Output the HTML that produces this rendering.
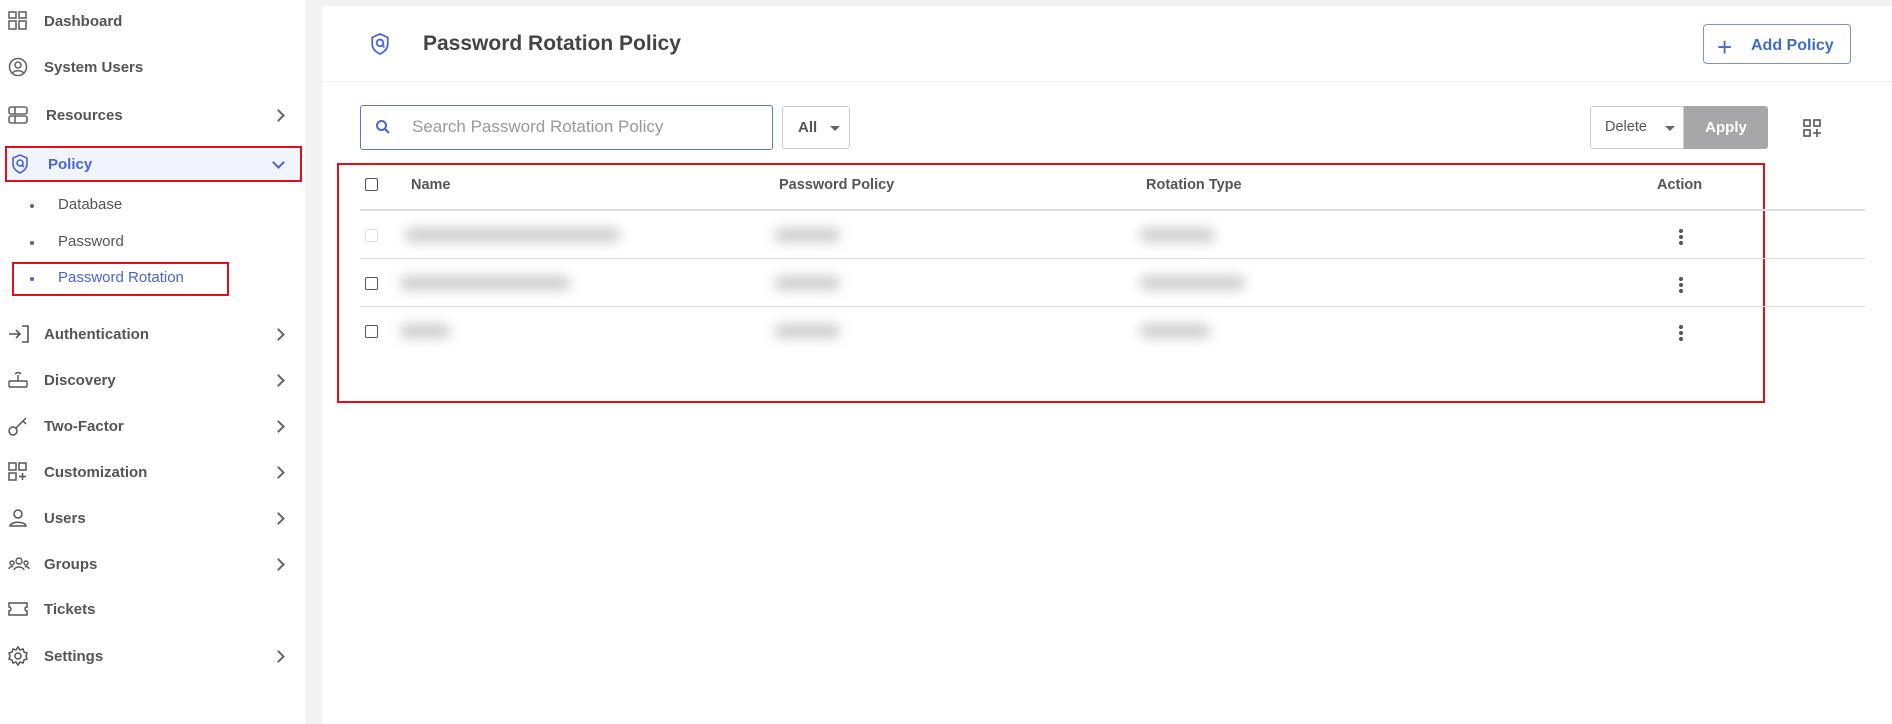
<!DOCTYPE html>
<html><head><meta charset="utf-8"><style>
*{box-sizing:border-box;margin:0;padding:0}
body{width:1892px;height:724px;background:#f2f2f3;font-family:"Liberation Sans",sans-serif;position:relative;overflow:hidden;color:#555}
.sb{position:absolute;left:0;top:0;width:305px;height:724px;background:#fff}
.it{position:absolute;left:0;height:30px;display:flex;align-items:center;font-size:15px;font-weight:bold;color:#555;width:300px}
.it svg{position:absolute;left:8px}
.it span{position:absolute;left:44px}
.chev{position:absolute;left:274px;width:9px;height:9px;border-right:2px solid #666;border-top:2px solid #666;transform:rotate(45deg)}
.sub{position:absolute;left:58px;font-size:15px;color:#555}
.dot{position:absolute;left:30px;width:4px;height:4px;border-radius:2px;background:#666}
.main{position:absolute;left:322px;top:6px;width:1570px;height:718px;background:#fff}
.red{position:absolute;border:2px solid #e0101a}
.abs{position:absolute}
.hd{font-size:14.5px;font-weight:bold;color:#555}
.cb{position:absolute;width:13px;height:13px;border:1.5px solid #555;border-radius:2px}
.blur{position:absolute;height:14px;background:#ccc;filter:blur(6px);border-radius:6px}
.kebab{position:absolute;width:4px;height:4px;border-radius:2px;background:#555;box-shadow:0 6px 0 #555,0 12px 0 #555}
.line{position:absolute;left:360px;width:1505px;height:1px;background:#ddd}
</style></head><body>
<div class="sb">
 <div class="it" style="top:6px"><svg width="20" height="20" viewBox="0 0 20 20" fill="none" stroke="#666" stroke-width="1.6"><rect x="1" y="1" width="7" height="6"/><rect x="11" y="1" width="7" height="6"/><rect x="1" y="10" width="7" height="8"/><rect x="11" y="10" width="7" height="8"/></svg><span>Dashboard</span></div>
 <div class="it" style="top:52px"><svg width="20" height="20" viewBox="0 0 20 20" fill="none" stroke="#666" stroke-width="1.6"><circle cx="10" cy="10" r="8.5"/><circle cx="10" cy="8" r="3"/><path d="M4.5 16c2-3 9-3 11 0"/></svg><span>System Users</span></div>
 <div class="it" style="top:100px"><svg width="20" height="20" viewBox="0 0 20 20" fill="none" stroke="#666" stroke-width="1.6"><rect x="1" y="2" width="18" height="7" rx="2"/><rect x="1" y="11" width="18" height="7" rx="2"/><path d="M7 2v7M7 11v7"/></svg><span style="left:46px">Resources</span><div class="chev"></div></div>
 <div class="abs" style="left:5px;top:146px;width:297px;height:36px;background:#f2f4fb"></div>
 <div class="red" style="left:5px;top:146px;width:297px;height:36px"></div>
 <div class="it" style="top:149px;color:#4a63d8"><svg style="left:11px" width="18" height="20" viewBox="0 0 18 20" fill="none" stroke="#4a63d8" stroke-width="1.6"><path d="M9 1l7 3v6c0 4-3 7-7 9-4-2-7-5-7-9V4z"/><circle cx="9" cy="9" r="3"/><path d="M11 11l2 2"/></svg><span style="left:48px">Policy</span><div class="chev" style="transform:rotate(135deg);border-color:#4a63d8;top:9px"></div></div>
 <div class="dot" style="top:204px"></div><div class="sub" style="top:196px">Database</div>
 <div class="dot" style="top:241px"></div><div class="sub" style="top:233px">Password</div>
 <div class="red" style="left:12px;top:262px;width:217px;height:34px"></div>
 <div class="dot" style="top:277px;background:#4a63d8"></div><div class="sub" style="top:269px;color:#4a63d8">Password Rotation</div>
 <div class="it" style="top:319px"><svg width="22" height="20" viewBox="0 0 22 20" fill="none" stroke="#555" stroke-width="1.6"><path d="M1 10h11M8 6l4 4-4 4M14 2h6v16h-6"/></svg><span>Authentication</span><div class="chev"></div></div>
 <div class="it" style="top:365px"><svg width="20" height="20" viewBox="0 0 20 20" fill="none" stroke="#555" stroke-width="1.4"><rect x="1" y="11" width="18" height="6" rx="1"/><path d="M10 11V5M7 4c2-2 4-2 6 0M4 11v0"/></svg><span>Discovery</span><div class="chev"></div></div>
 <div class="it" style="top:411px"><svg width="22" height="20" viewBox="0 0 22 20" fill="none" stroke="#555" stroke-width="1.5"><circle cx="5" cy="15" r="4"/><path d="M8 12l10-10M15 5l3 3"/></svg><span>Two-Factor</span><div class="chev"></div></div>
 <div class="it" style="top:457px"><svg width="20" height="20" viewBox="0 0 20 20" fill="none" stroke="#555" stroke-width="1.5"><rect x="1" y="1" width="7" height="7"/><rect x="11" y="1" width="7" height="7"/><rect x="1" y="11" width="7" height="7"/><path d="M14.5 11v7M11 14.5h7"/></svg><span>Customization</span><div class="chev"></div></div>
 <div class="it" style="top:503px"><svg width="20" height="20" viewBox="0 0 20 20" fill="none" stroke="#555" stroke-width="1.5"><circle cx="10" cy="6" r="4"/><path d="M2 18c1-5 15-5 16 0z"/></svg><span>Users</span><div class="chev"></div></div>
 <div class="it" style="top:549px"><svg width="22" height="20" viewBox="0 0 22 20" fill="none" stroke="#555" stroke-width="1.4"><circle cx="11" cy="7" r="3"/><circle cx="4" cy="9" r="2"/><circle cx="18" cy="9" r="2"/><path d="M6 16c1-4 9-4 10 0M1 15c0-2 3-3 4-2M21 15c0-2-3-3-4-2"/></svg><span>Groups</span><div class="chev"></div></div>
 <div class="it" style="top:594px"><svg width="20" height="20" viewBox="0 0 20 20" fill="none" stroke="#555" stroke-width="1.5"><path d="M1 4h18v4a2 2 0 000 4v4H1v-4a2 2 0 000-4z"/></svg><span>Tickets</span></div>
 <div class="it" style="top:641px"><svg width="20" height="20" viewBox="0 0 20 20" fill="none" stroke="#555" stroke-width="1.5"><circle cx="10" cy="10" r="3"/><path d="M10 1l2 3 3-1 1 3 3 1-1 3 1 3-3 1-1 3-3-1-2 3-2-3-3 1-1-3-3-1 1-3-1-3 3-1 1-3 3 1z"/></svg><span>Settings</span><div class="chev"></div></div>
</div>
<div class="main"></div>
<svg class="abs" style="left:370px;top:32px" width="20" height="24" viewBox="0 0 18 20" fill="none" stroke="#4a63d8" stroke-width="1.6"><path d="M9 1l7 3v6c0 4-3 7-7 9-4-2-7-5-7-9V4z"/><circle cx="9" cy="9" r="3"/><path d="M11 11l2 2"/></svg>
<div class="abs" style="left:423px;top:32px;font-size:21px;font-weight:bold;color:#444">Password Rotation Policy</div>
<div class="abs" style="left:322px;top:81px;width:1570px;height:1px;background:#eee"></div>
<div class="abs" style="left:1703px;top:24px;width:148px;height:40px;border:1px solid #7d95c6;border-radius:4px"></div>
<div class="abs" style="left:1717px;top:32px;font-size:26px;color:#4a63d8">+</div>
<div class="abs" style="left:1751px;top:37px;font-size:16px;font-weight:bold;color:#3d6cc0">Add Policy</div>
<div class="abs" style="left:360px;top:105px;width:413px;height:45px;border:1px solid #5a78d0;border-radius:3px"></div>
<svg class="abs" style="left:375px;top:119px" width="16" height="16" viewBox="0 0 16 16" fill="none" stroke="#4a63d8" stroke-width="2"><circle cx="6.5" cy="6.5" r="4.5"/><path d="M10 10l4 4"/></svg>
<div class="abs" style="left:412px;top:117px;font-size:17px;color:#999">Search Password Rotation Policy</div>
<div class="abs" style="left:782px;top:106px;width:68px;height:43px;border:1px solid #ccc;border-radius:3px"></div>
<div class="abs" style="left:798px;top:119px;font-size:15px;font-weight:bold;color:#555">All</div>
<div class="abs" style="left:830px;top:126px;border:5px solid transparent;border-top-color:#666"></div>
<div class="abs" style="left:1590px;top:106px;width:94px;height:43px;border:1px solid #ccc;border-radius:3px 0 0 3px"></div>
<div class="abs" style="left:1605px;top:119px;font-size:14.5px;color:#555">Delete</div>
<div class="abs" style="left:1665px;top:126px;border:5px solid transparent;border-top-color:#666"></div>
<div class="abs" style="left:1684px;top:106px;width:84px;height:43px;background:#a7a7a9;border-radius:0 3px 3px 0;color:#fff;font-weight:bold;font-size:15px;text-align:center;line-height:43px">Apply</div>
<svg class="abs" style="left:1803px;top:119px" width="18" height="18" viewBox="0 0 18 18" fill="none" stroke="#555" stroke-width="1.6"><rect x="1" y="1" width="6" height="6"/><rect x="11" y="1" width="6" height="6"/><rect x="1" y="11" width="6" height="6"/><path d="M14 10v8M10 14h8"/></svg>
<div class="red" style="left:337px;top:163px;width:1428px;height:240px"></div>
<div class="cb" style="left:365px;top:178px"></div>
<div class="abs hd" style="left:411px;top:177px">Name</div>
<div class="abs hd" style="left:779px;top:177px">Password Policy</div>
<div class="abs hd" style="left:1146px;top:177px">Rotation Type</div>
<div class="abs hd" style="left:1657px;top:177px">Action</div>
<div class="line" style="top:209px;height:2px"></div>
<div class="line" style="top:258px"></div>
<div class="line" style="top:306px"></div>
<div class="cb" style="left:365px;top:229px;border-color:#ddd"></div>
<div class="cb" style="left:365px;top:277px"></div>
<div class="cb" style="left:365px;top:325px"></div>
<div class="blur" style="left:405px;top:228px;width:215px"></div>
<div class="blur" style="left:400px;top:276px;width:170px"></div>
<div class="blur" style="left:400px;top:324px;width:50px"></div>
<div class="blur" style="left:775px;top:228px;width:65px"></div>
<div class="blur" style="left:775px;top:276px;width:65px"></div>
<div class="blur" style="left:775px;top:324px;width:65px"></div>
<div class="blur" style="left:1140px;top:228px;width:75px"></div>
<div class="blur" style="left:1140px;top:276px;width:105px"></div>
<div class="blur" style="left:1140px;top:324px;width:70px"></div>
<div class="kebab" style="left:1679px;top:229px"></div>
<div class="kebab" style="left:1679px;top:277px"></div>
<div class="kebab" style="left:1679px;top:325px"></div>
</body></html>
